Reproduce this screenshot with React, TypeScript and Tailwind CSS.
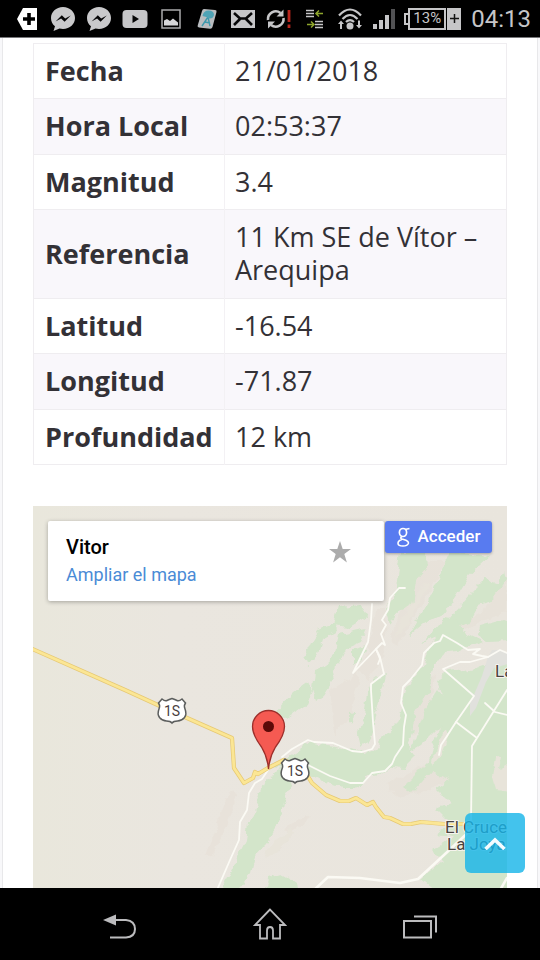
import type { ReactNode } from "react";

const rows: { label: string; value: string }[] = [
  { label: "Fecha", value: "21/01/2018" },
  { label: "Hora Local", value: "02:53:37" },
  { label: "Magnitud", value: "3.4" },
  { label: "Referencia", value: "11 Km SE de Vítor – Arequipa" },
  { label: "Latitud", value: "-16.54" },
  { label: "Longitud", value: "-71.87" },
  { label: "Profundidad", value: "12 km" },
];

function Slot({ children }: { children: ReactNode }) {
  return <span className="flex w-9 shrink-0 justify-center">{children}</span>;
}

function Messenger() {
  return (
    <svg width="26" height="26" viewBox="0 0 26 26">
      <path d="M13 1C6 1 1 6 1 12c0 3.500 1.500 6.300 4 8.300L3.500 25l6-2.500c1.100.3 2.300.4 3.500.4 7 0 12-4.900 12-10.900S20 1 13 1z" fill="#c9c9cb" />
      <path d="M5.500 15.500l6.300-6.300 3.400 3.200 5.600-2.800-6.200 6.200-3.500-3.200z" fill="#060607" />
    </svg>
  );
}

function StatusBar() {
  return (
    <header className="flex h-[38px] shrink-0 items-center justify-between border-b border-[#77777a] bg-black px-[9px] font-['Roboto',sans-serif] text-[#c6c6c8]">
      <div className="flex items-center">
        <Slot>
          <svg width="22" height="24" viewBox="0 0 22 24">
            <path d="M7 1h14v22H7L1 12z" fill="#fff" />
            <path d="M13 6v12M7 12h12" stroke="#000" strokeWidth="3.600" />
          </svg>
        </Slot>
        <Slot><Messenger /></Slot>
        <Slot><Messenger /></Slot>
        <Slot>
          <svg width="26" height="20" viewBox="0 0 26 20">
            <rect x=".5" y="1" width="25" height="18" rx="4" fill="#c6c6c8" />
            <path d="M10.500 6v8l6.500-4z" fill="#060607" />
          </svg>
        </Slot>
        <Slot>
          <svg width="20" height="20" viewBox="0 0 20 20">
            <rect x="1" y="1" width="18" height="18" fill="none" stroke="#aaaaac" strokeWidth="1.500" />
            <path d="M3 16.500v-5l3-1.500 3 2 3-2.500 5 4v3z" fill="#d6d6d8" />
          </svg>
        </Slot>
        <Slot>
          <svg width="22" height="24" viewBox="0 0 22 24">
            <path d="M8 2l11 1q2 0 1.500 2l-4 15q-.5 2-2.500 1.800L3 20.500q-2-.3-1.300-2L6 4q.5-2 2-2z" fill="#b9bcbf" />
            <path d="M12 10l-6 9M12 10l2 9M9 15l5 1" fill="none" stroke="#3d99ad" strokeWidth="1.400" />
            <path d="M6.500 9q1-5.500 6-5.500 5.500 0 5.500 4.500-1 4-5 3.500-2-2-6.500-2.500z" fill="#4fa3b5" />
          </svg>
        </Slot>
        <Slot>
          <svg width="24" height="18" viewBox="0 0 24 18">
            <rect width="24" height="18" fill="#c6c6c8" />
            <path d="M3 3l6 5.500h6L21 3M3 15l6-6M21 15l-6-6" fill="none" stroke="#060607" strokeWidth="2.600" />
          </svg>
        </Slot>
        <Slot>
          <svg width="26" height="22" viewBox="0 0 26 22">
            <path d="M2 12a7.800 7.800 0 0 1 12.500-7M17.500 10a7.800 7.800 0 0 1-12.500 7" fill="none" stroke="#c6c6c8" strokeWidth="2.600" />
            <path d="M17.500 1.500v7h-7zM2 20.500v-7h7z" fill="#c6c6c8" />
            <path d="M23 2v12M23 16.500v3.500" stroke="#b8261d" strokeWidth="2.800" />
          </svg>
        </Slot>
        <Slot>
          <svg width="20" height="20" viewBox="0 0 20 20" fill="none" strokeWidth="1.500">
            <path d="M1 1.500h8M1 4.500h8M1 7.500h8M10 12.500h8M10 15.500h8M10 18.500h8" stroke="#c6c6c8" />
            <path d="M18 4.500h-7M14 1.500l-3 3 3 3M2 15.500h7M6 12.500l3 3-3 3" stroke="#8fa62c" />
          </svg>
        </Slot>
        <span className="flex w-[34px] justify-center">
          <svg width="24" height="22" viewBox="0 0 24 22" fill="none" stroke="#c6c6c8">
            <path d="M1 7.500q11-12 22 0M4.500 11q7.500-8 15 0M8 14q4-4 8 0" strokeWidth="2.200" />
            <circle cx="12" cy="18" r="3.500" fill="#c6c6c8" stroke="none" />
            <path d="M0 16l3-3.500L6 16H4v5H2v-5zM18 17h2v-4.500h2V17h2l-3 3.500z" fill="#c6c6c8" stroke="none" />
          </svg>
        </span>
        <span className="flex w-[34px] justify-center">
          <svg width="24" height="22" viewBox="0 0 24 22">
            <path d="M1 16h4v5H1zM7 12h4v9H7zM13 7h4v14h-4z" fill="#c6c6c8" />
            <path d="M19 1h4v20h-4z" fill="#525254" />
          </svg>
        </span>
      </div>
      <div className="flex items-center gap-[10px]">
        <span className="flex h-[22px] items-stretch">
          <span className="my-[5px] w-[4px] border-y-2 border-l-2 border-[#c6c6c8]" />
          <span className="flex w-[38px] items-center justify-center border-2 border-[#c6c6c8] text-[15px] leading-none">13%</span>
          <span className="flex w-[15px] items-center justify-center border-l border-black bg-[#c6c6c8]">
            <svg width="9" height="9" viewBox="0 0 9 9"><path d="M4.500 0v9M0 4.500h9" stroke="#111" strokeWidth="1.500" /></svg>
          </span>
        </span>
        <time className="text-2xl leading-none">04:13</time>
      </div>
    </header>
  );
}

function Shield({ x, y }: { x: number; y: number }) {
  return (
    <g transform={`translate(${x} ${y})`}>
      <path
        d="M-10-12q3 2.500 5 1.500t5-2q3 1 5 2t5-1.500l3.500 4q-2 2.500-.5 6 2 5-.5 8.500-3 3.500-7 3.500-4 0-5.500 2-1.500-2-5.500-2-4 0-7-3.500-2.500-3.500-.5-8.500 1.500-3.500-.5-6z"
        fill="#fff"
        stroke="#5b5d5c"
        strokeWidth="1.500"
      />
      <text y="5" textAnchor="middle" className="fill-[#4a3f3f] font-['Roboto',sans-serif] text-[14px]">1S</text>
    </g>
  );
}

const route =
  "M30 648l95 42 35 16 72 32 2 30 10 15 9-5 2-6 3 2 10-6 16-8 20 10 8 13 14 12 14 6h9l7-3 11 7 6-3 3 5 8 10 6 1 13 6h8l10-2 23 2h25";

function TerrainMap() {
  return (
    <svg className="block w-full" viewBox="33 506 474 400" preserveAspectRatio="xMidYMin slice" role="img" aria-label="Mapa de Vitor">
      <defs>
        <linearGradient id="land" x1="0" x2="1" y1="0" y2="0">
          <stop offset="0" stopColor="#e9e7dc" />
          <stop offset=".3" stopColor="#eae6df" />
          <stop offset="1" stopColor="#e9e5dd" />
        </linearGradient>
        <filter id="rough" x="-5%" y="-5%" width="110%" height="110%">
          <feTurbulence type="fractalNoise" baseFrequency=".09" numOctaves="3" seed="4" />
          <feDisplacementMap in="SourceGraphic" scale="9" xChannelSelector="R" yChannelSelector="G" />
        </filter>
      </defs>
      <rect x="33" y="506" width="474" height="400" fill="url(#land)" />

      <g filter="url(#rough)" fill="#e6ddd3" opacity=".35">
        <path d="M425 560l22 0-35 62-14 22-8-4 14-40zM375 610l12 0-4 50-15 20-9-10 8-15z" />
        <path d="M440 620l40-5 27-35v30l-45 20-22-2zM385 785l40-20 35-8-10 25-50 15z" />
        <path d="M225 800l8-10 3 12-12 30-12 25-5-2zM285 830l20-15 5 4-20 15z" />
        <path d="M415 690l20-15-5 40-18 20zM330 690l30-18-10 45-15 20z" />
      </g>

      <g filter="url(#rough)" fill="#d3e5ca">
        <path d="M400 552l27 0 1 16-12 14-4 24-14 5-8 16-3-20 8-18zM450 552l40 4-22 20-22 36-24 12-14 12 20-34z" />
        <path d="M470 595l16-16 12 4 6-12 2 10-12 18-16 6-10 18-18 8-6-6zM480 626l22-6 10 2v18l-25 1-9-6z" />
        <path d="M338 606l22-2 8 12-20 12-14-2zM319 630l16-7 2 8-14 8-4 14-10 12-6-4 8-18zM339 634l28-6-6 14-14 6-7 16-12 10-5-5 12-18zM314 670l16-6 4 16-10 16-8 5-4-12zM294 692l14-10 4 8-6 14-20 14-14-3zM352 650l14-4-4 12-10 6z" />
        <path d="M375 678l10-4-6 26-6 28-4 12-8 8-3-14 6-18 3-22zM349 712l5-1-1 12-4-2z" />
        <path d="M285 760l26-18 25 4 29 8 11-4 8-12 14-15 8-32 10-16 9-10 6-20 12-12 16-3 24 11-18 8-20 2-12 18-4 22-14 22-3 20-5 12 8 10-12 12-10-1-12 9-16 2-10 11-13 0-20-6-22-12-28-4z" />
        <path d="M443 618l16 2 4 10-16 10-18-2-8 6z" />
        <path d="M265 782l10-12 14-4 4 20-10 16-3 20-14 22-11 12-4 18-14 18-20 12 9-22 20-40 2-20 7-10z" />
        <path d="M264 892l4-14 14-4 14 8 4 14-20 5z" />
        <path d="M448 672l28-4 24-8 12 2v171l-25-4-16 10-34-5 14-10-14-14 14-6-14-14 14-10-20-8-18 20-8-6 24-24 4-20 8-20 4-22-8-20z" />
        <path d="M424 712l14-22 12 14-10 22-20 20-10 6z" />
        <path d="M432 850l18-12 24-14 38-4v90H425l10-18-15-12 22-20z" />
      </g>

      <g filter="url(#rough)" fill="#e8e4da">
        <path d="M496 755l5 4-2 10 13-8v30l-16-2-4-14zM444 730l6 4-8 20-10 12 4-18z" />
        <path d="M395 640l6-20 14-20 10-18 4 2-20 38z" />
        <path d="M264 857l10-16 18-12 2 5-16 18z" />
      </g>

      <path d="M488 657l4-7 10 0 6 4v10l-14 4-8 14-10 26-6 8 0-12 12-28z" fill="#e1e1dd" />

      <g fill="none" stroke="#fbfaf4" strokeWidth="1.800" strokeLinejoin="round" strokeLinecap="round">
        <path d="M282 757l10-8 16-9 6 2 19 1 19 8 10 1 10-3 3-5-2-22-2-32v-6l13-10-4-17-4-8 6-6 3 2-4-11 5-9-4-5 6-10 2-12 9-10 6 0" />
        <path d="M372 604l-1 16-3 22-15 31 23-24 4 10-2 5" />
        <path d="M308 765L330 776 350 783 363 783 372 773 385 771 392 764 395 757 403 745 404 727 406 715 401 703 403 687 410 680 422 665 424 653 434 643 440 641 443 635 457 643 468 650 480 649 473 654 482 656 488 657 470 662 460 662 443 669 474 696 456 722 447 736 441 745 439 755" />
        <path d="M488 657l12-7 7 3M456 722l21 16M507 690l-35 56-1 76M485 703l10 9 12 3" />
        <path d="M268 770l-6 9-7 4-6 10-2 17-7 12-1 18-9 20-13 30" />
        <path d="M312 892l16-15 32 1 40 5 18-4 26-24 30-28M507 878l-8 14" strokeWidth="2.600" />
      </g>

      <g fill="none" strokeLinejoin="round">
        <path d={route} stroke="#e6c873" strokeWidth="4.200" />
        <path d={route} stroke="#fbe694" strokeWidth="2.800" />
      </g>

      <Shield x={172} y={711} />
      <Shield x={295} y={771} />

      <path d="M268.500 769q-1-12-7-22-9-12-9-20.500a16 16 0 0 1 32 0q0 8.500-9 20.500-6 10-7 22z" fill="#f55a52" stroke="#9c2f2b" strokeWidth="1.300" />
      <circle cx="268.500" cy="726.500" r="5.500" fill="#5c0a08" />

      <g className="fill-[#4b4541] font-['Roboto',sans-serif] text-[17px]" stroke="#f6f4ee" strokeWidth="2" strokeLinejoin="round" paintOrder="stroke">
        <text x="495" y="677">La Joya</text>
        <text x="445" y="833">El Cruce</text>
        <text x="447" y="850">La Joya</text>
      </g>
    </svg>
  );
}

function MapEmbed() {
  return (
    <section id="mapa" className="relative mt-[41px] overflow-hidden font-['Roboto',sans-serif]">
      <TerrainMap />
      <div className="absolute inset-x-[15px] top-[15px] flex items-start gap-px">
        <div className="flex h-20 flex-1 justify-between rounded-[2px] bg-white pt-[14px] pr-8 pl-[18px] shadow-[0_1px_4px_rgba(0,0,0,0.3)]">
          <div>
            <h2 className="text-xl leading-6 font-medium text-black">Vitor</h2>
            <a href="#mapa" className="block text-lg leading-8 text-[#4a8bd6]">Ampliar el mapa</a>
          </div>
          <button type="button" aria-label="Guardar" className="mt-[5px] h-6 w-6">
            <svg width="24" height="24" viewBox="0 0 24 24">
              <path d="M12 1l2.700 8H23l-6.700 5 2.600 8.500L12 17.300 5.100 22.500 7.700 14 1 9h8.300z" fill="#acacac" />
            </svg>
          </button>
        </div>
        <button type="button" className="flex h-8 w-[107px] items-center justify-center gap-2 rounded-[3px] bg-[#587bf0] text-[17px] font-medium text-white shadow-[0_1px_3px_rgba(0,0,0,0.3)]">
          <svg width="13" height="20" viewBox="0 0 13 20" fill="none" stroke="#fff" aria-hidden="true">
            <ellipse cx="6" cy="5.500" rx="3.600" ry="4" strokeWidth="1.700" />
            <path d="M8 2.500l4.500-1" strokeWidth="1.500" />
            <path d="M5 9.500q-2.500 1.500 0 2.500l4 1.200q3 1.300 2.300 3.300-1 2.500-5.300 2.500-5 0-5-2.800 0-2.700 4-3.700" strokeWidth="1.600" />
          </svg>
          Acceder
        </button>
      </div>
    </section>
  );
}

function NavBar() {
  return (
    <nav className="grid h-18 shrink-0 grid-cols-3 bg-black px-[45px] pt-1 text-[#bcbcbe]">
      <button type="button" aria-label="Atrás" className="flex items-center justify-center">
        <svg width="34" height="32" viewBox="0 0 34 32" fill="none">
          <path d="M12 10h11q9 1 9 9t-9 8.500H7" stroke="currentColor" strokeWidth="2" />
          <path d="M0 10l13-5.500v11z" fill="currentColor" />
        </svg>
      </button>
      <button type="button" aria-label="Inicio" className="flex items-center justify-center">
        <svg width="34" height="36" viewBox="0 0 34 36" fill="none" stroke="currentColor" strokeWidth="1.800">
          <path d="M17 1.500L2 17h5v13.500h7v-8q0-3.500 3-3.500t3 3.500v8h7V17h5z" />
        </svg>
      </button>
      <button type="button" aria-label="Recientes" className="flex items-center justify-center">
        <svg width="34" height="32" viewBox="0 0 34 32" fill="none" stroke="currentColor" strokeWidth="2">
          <path d="M1 11h27v16.500H1zM11 6.500h22v16" />
        </svg>
      </button>
    </nav>
  );
}

export default function App() {
  return (
    <div className="flex h-screen flex-col bg-[#f8f8fa]">
      <StatusBar />
      <div className="relative min-h-0 flex-1">
        <main className="mx-[2px] h-full overflow-hidden border-x border-[#e8e8ea] bg-white px-[30px] pt-[5px]">
          <table className="w-full border-collapse border border-[#efedf0] font-['Open_Sans','Noto_Sans',sans-serif] text-[27px] leading-[33px] text-[#333136]">
            <tbody>
              {rows.map((row) => (
                <tr key={row.label} className="group border-b border-[#efedf0] odd:bg-white even:bg-[#f9f7fb]">
                  <th scope="row" className="w-[191px] border-r border-[#f3f1f4] pt-[10px] pr-[10px] pb-[11px] pl-[11px] text-left font-bold group-even:pb-[12px]">
                    {row.label}
                  </th>
                  <td className="px-[10px] pt-[10px] pb-[11px] group-even:pb-[12px]">{row.value}</td>
                </tr>
              ))}
            </tbody>
          </table>
          <MapEmbed />
        </main>
        <button type="button" aria-label="Volver arriba" className="absolute right-[15px] bottom-[15px] flex size-[60px] items-center justify-center rounded-md bg-[#14b4e8]/80">
          <svg width="22" height="14" viewBox="0 0 22 14" fill="none" stroke="#f4fbff" strokeWidth="3.500">
            <path d="M1.500 13l9.500-9 9.500 9" />
          </svg>
        </button>
      </div>
      <NavBar />
    </div>
  );
}
